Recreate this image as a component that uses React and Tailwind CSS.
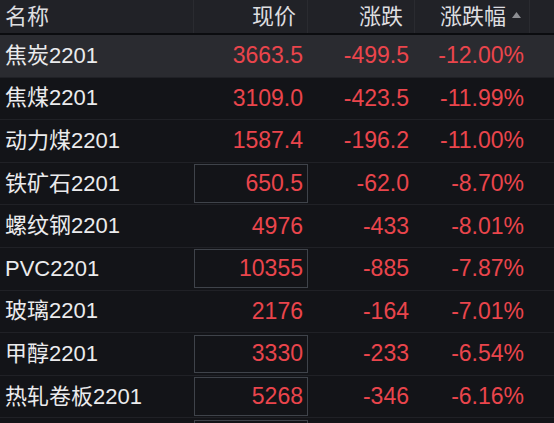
import React from 'react';

const rows = [
  { name: '焦炭2201', price: '3663.5', change: '-499.5', pct: '-12.00%', active: true },
  { name: '焦煤2201', price: '3109.0', change: '-423.5', pct: '-11.99%' },
  { name: '动力煤2201', price: '1587.4', change: '-196.2', pct: '-11.00%' },
  { name: '铁矿石2201', price: '650.5', change: '-62.0', pct: '-8.70%', boxed: true },
  { name: '螺纹钢2201', price: '4976', change: '-433', pct: '-8.01%' },
  { name: 'PVC2201', price: '10355', change: '-885', pct: '-7.87%', boxed: true },
  { name: '玻璃2201', price: '2176', change: '-164', pct: '-7.01%' },
  { name: '甲醇2201', price: '3330', change: '-233', pct: '-6.54%', boxed: true },
  { name: '热轧卷板2201', price: '5268', change: '-346', pct: '-6.16%', boxed: true },
  // next row only peeks in at the bottom edge
  { name: '', price: '', change: '', pct: '', boxed: true },
];

const cols = 'grid grid-cols-[194px_114px_107px_115px_1fr]';

const App = () => {
  return (
    <div
      className="w-[554px] h-[423px] overflow-hidden bg-[#131418] text-[22px] leading-none"
      style={{ fontFamily: '"Liberation Sans", "Noto Sans CJK SC", sans-serif' }}
    >
      {/* Header */}
      <div className={`${cols} h-[35px] bg-[#212227] border-b-2 border-[#0b0c0f] text-[#dedee0]`}>
        <div className="flex items-center pl-[5px] border-r border-[#2a2b30]">名称</div>
        <div className="flex items-center justify-end pr-[11px] border-r border-[#2a2b30]">现价</div>
        <div className="flex items-center justify-end pr-[11px] border-r border-[#2a2b30]">涨跌</div>
        <div className="flex items-center justify-end pr-[8px] border-r border-[#2a2b30]">
          涨跌幅
          <svg width="9" height="6" viewBox="0 0 9 6" className="ml-[6px] mb-[3px]">
            <path d="M0 6 L4.5 0 L9 6 Z" fill="#8d8e93" />
          </svg>
        </div>
        <div />
      </div>

      {/* Rows */}
      {rows.map((r, i) => (
        <div
          key={i}
          className={`${cols} h-[42.6px] border-b border-[#202126] ${r.active ? 'bg-[#2a2b30]' : ''}`}
        >
          <div className="flex items-center pl-[5px] text-[#ebebed]">{r.name}</div>
          <div className="flex items-center py-[1.5px]">
            <div
              className={`flex items-center justify-end w-full h-full pr-[4px] text-[23px] text-[#ea454c] border ${
                r.boxed ? 'border-[#3f434a]' : 'border-transparent'
              }`}
            >
              {r.price}
            </div>
          </div>
          <div className="flex items-center justify-end pr-[6px] text-[23px] text-[#ea454c]">{r.change}</div>
          <div className="flex items-center justify-end pr-[6px] text-[23px] text-[#ea454c]">{r.pct}</div>
          <div />
        </div>
      ))}
    </div>
  );
};

export default App;
